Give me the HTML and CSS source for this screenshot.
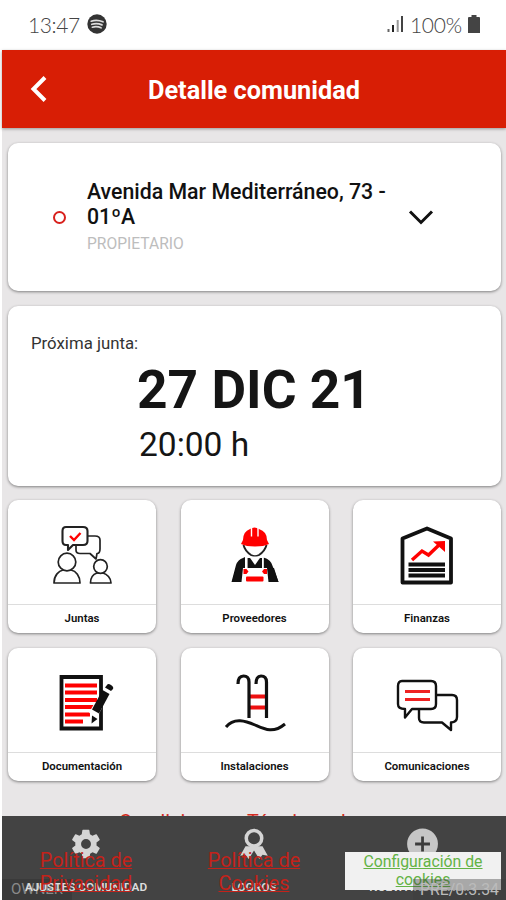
FILE: index.html
```
<!DOCTYPE html>
<html lang="es">
<head>
    <meta charset="UTF-8">
    <meta name="viewport" content="width=device-width, initial-scale=1.0">
    <title>Detalle comunidad</title>
    <link rel="stylesheet" href="styles.css">
</head>
<body>
    <!-- Status Bar -->
    <div class="status-bar">
        <span class="clock">13:47</span>
        <svg class="spotify" width="20" height="20" viewBox="0 0 20 20">
            <circle cx="10" cy="10" r="9.7" fill="#333"/>
            <g fill="none" stroke="#ddd" stroke-width="1.7" stroke-linecap="round">
                <path d="M4.2 7.2Q10 5.2 16 7.8"/>
                <path d="M4.8 10.3Q10 8.7 15 10.9"/>
                <path d="M5.4 13.2Q10 12 14 13.8"/>
            </g>
        </svg>
        <svg class="signal" width="17" height="18" viewBox="0 0 17 18">
            <path d="M.5 14h2v3h-2z" fill="#666"/>
            <path d="M5 10h2v7H5z" fill="#222"/>
            <path d="M9.7 5h2v12h-2z" fill="#999"/>
            <path d="M14 1h2v16h-2z" fill="#444"/>
        </svg>
        <span class="battery-text">100%</span>
        <svg class="battery" width="12" height="18" viewBox="0 0 12 18">
            <path d="M3.5 0h5v2H11q1 0 1 1v15H0V3q0-1 1-1h2.500z" fill="#444"/>
        </svg>
    </div>

    <div class="app">
        <!-- Header Section -->
        <header>
            <svg class="back" width="18" height="28" viewBox="0 0 18 28">
                <path d="M15 2.500L3.500 14 15 25.500" fill="none" stroke="#fff" stroke-width="4"/>
            </svg>
            <h1>Detalle comunidad</h1>
        </header>

        <main>
            <!-- Community -->
            <section class="card community">
                <span class="dot"></span>
                <div class="address">
                    <h2>Avenida Mar Mediterráneo, 73 - 01ºA</h2>
                    <p>PROPIETARIO</p>
                </div>
                <svg width="26" height="16" viewBox="0 0 26 16">
                    <path d="M2 2.500l11 11 11-11" fill="none" stroke="#111" stroke-width="3"/>
                </svg>
            </section>

            <!-- Next meeting -->
            <section class="card meeting">
                <p class="meeting-label">Próxima junta:</p>
                <p class="meeting-date">27 DIC 21</p>
                <p class="meeting-time">20:00 h</p>
            </section>

            <!-- Menu -->
            <section class="menu">
                <a class="card tile">
                    <svg viewBox="0 0 60 60">
                        <g fill="#fff" stroke="#222" stroke-width="1.700" stroke-linejoin="round">
                            <path d="M28 11H43Q48 11 48 15V24Q48 28.500 45 28.500L44 34 38 28.500H28Q24 28.500 24 25V14z"/>
                            <path d="M14 2H31Q35.500 2 35.500 6V16Q35.500 20 31 20H21L16 25V20H14Q10.500 20 10.500 16V6Q10.500 2 14 2z" stroke-width="2.100"/>
                            <path d="M2 58C2 50 7 46 11 45H19C24 46 28 51 28 58z"/>
                            <circle cx="15" cy="37" r="8.800"/>
                            <path d="M38.500 58C38.500 52 42 49 45 48H51C55 49 59 53 59 58z"/>
                            <circle cx="48.500" cy="41.500" r="6.800"/>
                        </g>
                        <path d="M18 11l4 4 6.500-7" fill="none" stroke="#f00" stroke-width="2.400"/>
                    </svg>
                    <span>Juntas</span>
                </a>
                <a class="card tile">
                    <svg viewBox="0 0 60 60">
                        <path d="M18.500 20Q20 26 26 30Q30 32.500 34 30Q40 26 41.500 20" fill="none" stroke="#222" stroke-width="1.900"/>
                        <path d="M18 15Q18 6.500 25 4Q29.500 1 34 4Q42 6.500 42 15L44 19Q39 21.500 30 21.500T16 19z" fill="#f00"/>
                        <path d="M26.500 2.500v9M33 2.500v9" stroke="#fff" stroke-width="1.400"/>
                        <path d="M18 33L20 32V44H38.500V32.500Q46 34 48 42L53.500 57H44.500L42 46V57H18V46L15 57H6.500L11 40Q13 34.500 18 33z" fill="#111"/>
                        <path d="M17 43H43V57H17z" fill="#fff"/>
                        <path d="M7 57L11 43H18L16.500 57zM43.500 57L42 43H49L53.500 57z" fill="#111"/>
                        <path d="M22.500 33V43H37V33" fill="#111"/>
                        <path d="M24 31.500L30 40 36 31.500z" fill="#fff"/>
                        <path d="M21.500 32V43M38 32V43" stroke="#fff" stroke-width="1.300"/>
                        <path d="M18.500 44h3l2 2.500-2 2.500h-3zM42 44h-3l-2 2.500 2 2.500h3z" fill="#f00"/>
                        <rect x="21" y="51.500" width="17.500" height="5" rx="1" fill="#f00"/>
                    </svg>
                    <span>Proveedores</span>
                </a>
                <a class="card tile">
                    <svg viewBox="0 0 60 60">
                        <path d="M5.500 13.500L30 3.500 54 13.500V57.500H5.500z" fill="none" stroke="#111" stroke-width="3.800" stroke-linejoin="round"/>
                        <path d="M15 35L25 26 31.500 30 42 20" fill="none" stroke="#f00" stroke-width="3.400"/>
                        <path d="M36 16.500L48 16V27z" fill="#f00"/>
                        <path d="M11.500 39.500H48M11.500 45H48M11.500 50.500H48" stroke="#111" stroke-width="3.800"/>
                    </svg>
                    <span>Finanzas</span>
                </a>
                <a class="card tile">
                    <svg viewBox="0 0 60 60">
                        <path d="M9.500 4H49V55.500H9.500z" fill="none" stroke="#111" stroke-width="3.800"/>
                        <path d="M13 12.500H45M13 19.500H45M13 27H45M13 34H43M13 41.500H38M13 48.500H31" stroke="#f00" stroke-width="4"/>
                        <path d="M41 42L46 33" stroke="#fff" stroke-width="9"/>
                        <path d="M43.500 38.500L54 19" stroke="#111" stroke-width="8"/>
                        <path d="M55 12q1-2 4 0t2 4l-2 2-6-3.500z" fill="#111"/>
                        <path d="M40 42.500l5.500 3.500-6 4.500z" fill="#111"/>
                    </svg>
                    <span>Documentación</span>
                </a>
                <a class="card tile">
                    <svg viewBox="0 0 60 60">
                        <path d="M24 23.500H42M24 34.500H42" stroke="#e11" stroke-width="4"/>
                        <path d="M13 11Q13 3 18.500 3Q24 3 24 9V45M31 11Q31 3 36 3Q41.500 3 41.500 9V45" fill="none" stroke="#111" stroke-width="3.200"/>
                        <path d="M1 54C9 44 21 48 30 52S48 61 60 51" fill="none" stroke="#111" stroke-width="3"/>
                    </svg>
                    <span>Instalaciones</span>
                </a>
                <a class="card tile">
                    <svg viewBox="0 0 60 60">
                        <g fill="#fff" stroke="#111" stroke-width="2.400" stroke-linejoin="round">
                            <path d="M25 22H55Q60 22 60 27V44Q60 49 54 49.500V57L45 49.500H27Q22 49.500 22 45V26z"/>
                            <path d="M5 8H34Q39 8 39 13V31Q39 36 34 36H15L8 44.500V36Q1 36 1 31V13Q1 8 5 8z"/>
                        </g>
                        <path d="M8 18.500H33M8 26.500H33" stroke="#e22" stroke-width="3"/>
                    </svg>
                    <span>Comunicaciones</span>
                </a>
            </section>

            <p class="terms">Condiciones y Términos de</p>
        </main>

        <!-- Tab Bar -->
        <footer>
            <span class="tag role">OWNER</span>
            <nav class="tabs">
                <div class="tab">
                    <svg width="34" height="34" viewBox="0 0 24 24">
                        <path fill="#d5d5d5" d="M19.400 13a7.500 7.500 0 0 0 0-2l2.100-1.600a.5.500 0 0 0 .1-.7l-2-3.400a.5.500 0 0 0-.6-.2l-2.500 1a7.300 7.300 0 0 0-1.700-1l-.4-2.600a.5.500 0 0 0-.5-.5h-4a.5.500 0 0 0-.5.500L9 5.100a7.300 7.300 0 0 0-1.700 1l-2.400-1a.5.500 0 0 0-.6.200l-2 3.400a.5.500 0 0 0 .1.700L4.500 11a7.500 7.500 0 0 0 0 2l-2.100 1.600a.5.500 0 0 0-.1.700l2 3.400a.5.500 0 0 0 .6.200l2.500-1a7.300 7.300 0 0 0 1.700 1l.4 2.600a.5.500 0 0 0 .5.500h4a.5.500 0 0 0 .5-.5l.4-2.600a7.300 7.300 0 0 0 1.700-1l2.400 1a.5.500 0 0 0 .6-.2l2-3.400a.5.500 0 0 0-.1-.7zM12 15.500a3.500 3.500 0 1 1 0-7 3.500 3.500 0 0 1 0 7z"/>
                    </svg>
                    <span>AJUSTES COMUNIDAD</span>
                </div>
                <div class="tab">
                    <svg width="34" height="34" viewBox="0 0 32 32">
                        <path d="M8 18L3 27l5-1 3 4 5-8 5 8 3-4 5 1-5-9z" fill="#d5d5d5"/>
                        <circle cx="16" cy="10.500" r="7.300" fill="#434343" stroke="#d5d5d5" stroke-width="3.300"/>
                    </svg>
                    <span>LOGROS</span>
                </div>
                <div class="tab">
                    <svg width="34" height="34" viewBox="0 0 32 32">
                        <circle cx="16.500" cy="16" r="14.500" fill="#c6c6c6"/>
                        <path d="M16.500 9v14M9.500 16h14" stroke="#3c3c3c" stroke-width="2.600"/>
                    </svg>
                    <span>NUEVA INCIDENCIA</span>
                </div>
            </nav>
            <!-- Legal links, drawn over the tabs -->
            <div class="legal">
                <a href="#">Política de Privacidad</a>
                <a href="#">Política de Cookies</a>
                <a href="#" class="cookies">Configuración de cookies</a>
            </div>
            <span class="tag version">PRE/0.3.34</span>
        </footer>
    </div>
</body>
</html>
```
FILE: styles.css
```
/* Global Styles */
* {
    box-sizing: border-box;
}

body {
    font-family: Roboto, 'Liberation Sans', sans-serif;
    margin: 0;
    background: #fff;
    color: #151515;
    height: 900px;
    overflow: hidden;
}

h1, h2, p {
    margin: 0;
}

/* Status Bar */
.status-bar {
    display: flex;
    align-items: center;
    height: 50px;
    padding: 0 26px 2px 28px;
    font-family: Lato, sans-serif;
    font-size: 21px;
    color: #444;
}

.clock {
    letter-spacing: -0.4px;
    font-weight: 300;
}

.spotify {
    margin-left: 7px;
}

.signal {
    margin-left: auto;
    margin-right: 6px;
}

.battery-text {
    font-weight: 300;
    letter-spacing: -0.2px;
}

.battery {
    margin-left: 6px;
}

.app {
    display: flex;
    flex-direction: column;
    height: 850px;
    margin-left: 2px;
    background: #e8e6e7;
}

/* Header Section */
header {
    display: grid;
    grid-template-columns: 90px 1fr 90px;
    align-items: center;
    flex: none;
    height: 78px;
    background: #d81e05;
    color: #fff;
    box-shadow: 0 1px 3px rgba(0, 0, 0, 0.35);
}

.back {
    margin-left: 28px;
}

header h1 {
    padding-top: 2px;
    font-size: 25.3px;
    font-weight: 700;
    text-align: center;
    white-space: nowrap;
}

/* Cards */
main {
    flex: 1;
    min-height: 0;
    padding: 15px 5px 0 6px;
    overflow: hidden;
}

.card {
    background: #fff;
    border-radius: 10px;
    box-shadow: 0 1px 3px rgba(0, 0, 0, 0.45);
}

.community {
    display: flex;
    align-items: center;
    height: 148px;
    padding-left: 45px;
}

.dot {
    width: 13px;
    height: 13px;
    margin-right: 21px;
    border: 2.5px solid #d8201c;
    border-radius: 50%;
}

.address {
    width: 305px;
    margin-right: 16px;
    padding-bottom: 2px;
}

.address h2 {
    font-size: 21.3px;
    font-weight: 500;
    line-height: 25px;
    color: #111;
}

.address p {
    margin-top: 6px;
    font-size: 15.6px;
    line-height: 19px;
    color: #bdbdbd;
}

.meeting {
    height: 180px;
    margin-top: 15px;
    padding: 26px 22px 0;
}

.meeting-label {
    padding-left: 1px;
    font-size: 16.8px;
    line-height: 22px;
    color: #333;
}

.meeting-date {
    margin: 5px 0 0 107px;
    font-size: 53.3px;
    line-height: 62px;
    font-weight: 700;
}

.meeting-time {
    margin: 5px 0 0 109px;
    font-size: 33.5px;
    line-height: 38px;
}

/* Menu */
.menu {
    display: grid;
    grid-template-columns: repeat(3, 148px);
    justify-content: space-between;
    row-gap: 15px;
    margin-top: 14px;
}

.tile {
    display: flex;
    flex-direction: column;
    align-items: center;
    height: 133px;
}

.tile svg {
    width: 60px;
    height: 60px;
    margin: 25px 0 19px;
    overflow: visible;
}

.tile span {
    width: 100%;
    border-top: 1px solid #ddd;
    font-size: 11.4px;
    font-weight: 600;
    line-height: 26px;
    text-align: center;
    color: #111;
}

.terms {
    margin: 30px 0 0 111px;
    font-size: 19.8px;
    line-height: 23px;
    color: #d32b20;
    white-space: nowrap;
}

/* Tab Bar */
footer {
    position: relative;
    flex: none;
    height: 84px;
    background: #434343;
}

.tabs {
    position: relative;
    display: grid;
    grid-template-columns: repeat(3, 1fr);
    height: 84px;
}

.tab {
    display: flex;
    flex-direction: column;
    align-items: center;
    padding-top: 11px;
}

.tab span {
    margin-top: 19px;
    font-size: 11.8px;
    line-height: 14px;
    font-weight: 600;
    color: #ddd;
    white-space: nowrap;
}

.legal {
    position: absolute;
    inset: 33px 0 auto 0;
    display: grid;
    grid-template-columns: repeat(3, 1fr);
    justify-items: center;
}

.legal a {
    width: 120px;
    font-size: 19.8px;
    line-height: 23px;
    text-align: center;
    color: #c4221a;
}

.legal .cookies {
    justify-self: end;
    width: 156px;
    height: 38px;
    margin: 3px 5px 0 0;
    padding-top: 1px;
    font-size: 15.8px;
    line-height: 18px;
    background: #f1f1f1;
    color: #63b345;
}

.tag {
    position: absolute;
    bottom: 0;
    height: 21px;
    font-size: 15px;
    line-height: 21px;
    color: #8a8a8a;
    background: rgba(60, 60, 60, 0.4);
}

.role {
    left: 0;
    padding: 0 9px;
    background: #3a3a3a;
}

.version {
    right: 0;
    padding: 0 7px;
    font-size: 15.8px;
    color: #bbb;
}
```
